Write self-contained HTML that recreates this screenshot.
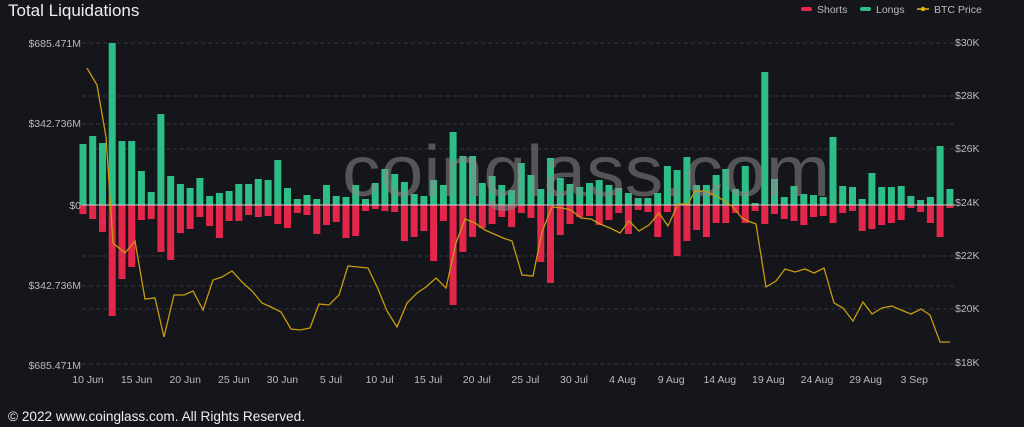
<!DOCTYPE html>
<html><head><meta charset="utf-8"><style>
html,body{margin:0;padding:0;background:#15161b;width:1024px;height:427px;overflow:hidden;font-family:"Liberation Sans",sans-serif}
</style></head><body>
<svg id="s" width="1024" height="427" xmlns="http://www.w3.org/2000/svg" style="position:absolute;left:0;top:0">
<rect width="1024" height="427" fill="#15161b"/>
<g id="grid" stroke="#34363c" stroke-dasharray="4,3" stroke-width="1">
<line x1="82" x2="955" y1="43" y2="43"/><line x1="82" x2="955" y1="96" y2="96"/>
<line x1="82" x2="955" y1="124" y2="124"/><line x1="82" x2="955" y1="149" y2="149"/>
<line x1="82" x2="955" y1="256" y2="256"/><line x1="82" x2="955" y1="286" y2="286"/>
<line x1="82" x2="955" y1="309" y2="309"/><line x1="82" x2="955" y1="364" y2="364"/>
</g>
<g id="bars"></g>
<line x1="82" x2="955" y1="205" y2="205" stroke="#d0d0d0" stroke-width="1"/>
<text x="342" y="196" font-family="Liberation Sans,sans-serif" font-size="72" textLength="488" lengthAdjust="spacingAndGlyphs" fill="#8a8a8a" fill-opacity="0.55">coinglass.com</text>
<polyline id="btc" fill="none" stroke="#c79b0f" stroke-width="1.3"/>
<text x="8" y="16" font-size="17" fill="#eee">Total Liquidations</text>
<g font-size="10.5" fill="#bbb">
<rect x="801" y="7" width="11" height="4" rx="2" fill="#e5264b"/><text x="817" y="13">Shorts</text>
<rect x="860" y="7" width="11" height="4" rx="2" fill="#2dbd86"/><text x="876" y="13">Longs</text>
<line x1="917" x2="929" y1="9" y2="9" stroke="#e0b40f" stroke-width="1.5"/><circle cx="923" cy="9" r="2.2" fill="#e0b40f"/><text x="934" y="13">BTC Price</text>
</g>
<g font-size="10.5" fill="#bbb" text-anchor="end">
<text x="81" y="47">$685.471M</text><text x="81" y="127">$342.736M</text><text x="81" y="209">$0</text>
<text x="81" y="289">$342.736M</text><text x="81" y="369">$685.471M</text>
</g>
<g font-size="10.5" fill="#bbb">
<text x="955" y="46">$30K</text><text x="955" y="99">$28K</text><text x="955" y="152">$26K</text>
<text x="955" y="206">$24K</text><text x="955" y="259">$22K</text><text x="955" y="312">$20K</text><text x="955" y="366">$18K</text>
</g>
<g font-size="10.5" fill="#bbb" text-anchor="middle" id="xl"></g>
<text x="8" y="421" font-size="14" textLength="297" lengthAdjust="spacingAndGlyphs" fill="#eee">© 2022 www.coinglass.com. All Rights Reserved.</text>
</svg>
<script>
var L=[61,69,62,162,64,64,34,13,91,29,21,17,27,9,12,14,21,21,26,25,45,17,6,10,6,20,9,8,20,6,22,36,31,23,11,9,25,20,73,49,49,22,29,20,15,42,30,16,47,27,21,18,22,25,20,17,12,7,7,12,39,35,48,20,20,30,36,16,39,2,133,26,8,19,11,10,8,68,19,18,6,32,18,18,19,9,5,8,59,16];
var S=[9,14,27,111,74,62,15,14,47,55,28,24,12,21,33,16,16,10,12,11,19,23,8,10,29,20,17,33,31,6,4,6,7,36,32,26,56,16,100,47,32,23,19,12,22,8,13,57,78,30,19,12,11,20,15,8,29,5,7,32,7,51,36,25,32,18,18,8,18,6,19,9,14,16,20,12,11,18,8,6,26,24,20,18,15,3,7,18,32,3];
var g=document.getElementById('bars'),h='';
for(var i=0;i<90;i++){var x=83+i*9.74-3.5;
h+='<rect x="'+x.toFixed(1)+'" y="'+(205-L[i])+'" width="7" height="'+L[i]+'" fill="#2dbd86"/>';
h+='<rect x="'+x.toFixed(1)+'" y="205" width="7" height="'+S[i]+'" fill="#e5264b"/>';}
g.innerHTML=h;
var P="87,68 97,85 106,137 113,243 125,253 135,241 145,299 155,298 164,337 174,295 184,295 193,291 203,310 213,280 222,277 232,271 242,282 252,291 262,303 271,307 281,312 291,329 300,330 310,328 319,304 329,305 339,295 348,266 358,267 368,268 378,289 387,311 397,327 407,303 417,293 426,287 436,278 446,288 456,243 465,219 475,223 485,230 494,234 503,238 512,241 522,275 533,276 542,232 552,207 562,208 571,210 581,218 591,219 600,224 610,228 620,233 629,221 639,231 649,225 659,213 668,226 678,204 688,204 695,191 705,191 718,197 732,206 742,218 748,221 756,224 766,287 776,281 785,269 795,272 805,269 814,273 824,268 834,303 843,308 853,321 863,302 872,314 882,308 892,306 901,310 911,314 921,309 930,315 940,342 950,342";
document.getElementById('btc').setAttribute('points',P);
var lab=["10 Jun","15 Jun","20 Jun","25 Jun","30 Jun","5 Jul","10 Jul","15 Jul","20 Jul","25 Jul","30 Jul","4 Aug","9 Aug","14 Aug","19 Aug","24 Aug","29 Aug","3 Sep"],t='';
for(var j=0;j<lab.length;j++){t+='<text x="'+(88+j*48.6).toFixed(1)+'" y="383">'+lab[j]+'</text>';}
document.getElementById('xl').innerHTML=t;
</script>
</body></html>
